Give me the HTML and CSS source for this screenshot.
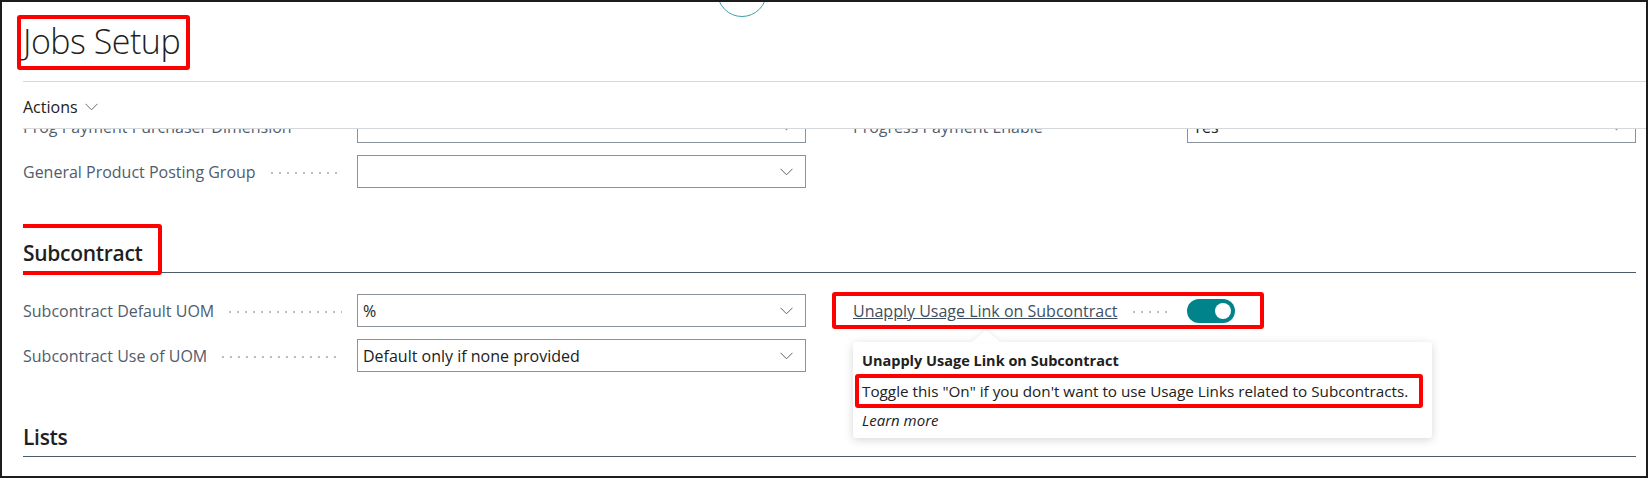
FILE: index.html
```html
<!DOCTYPE html>
<html lang="en">
<head>
  <meta charset="UTF-8" />
  <title>Jobs Setup</title>
  <link rel="stylesheet" href="styles.css">
</head>
<body>

<div class="page">
  <span class="busy-ring"></span>

  <header class="page-head">
    <div class="title-row">
      <h1 class="page-title">Jobs Setup</h1>
    </div>
    <div class="action-bar">
      <button class="actions-btn">
        Actions
        <svg width="13" height="8" viewBox="0 0 13 8"><polyline points="0.5,0.8 6.5,6.8 12.5,0.8" fill="none" stroke="#6b6b6b" stroke-width="1"/></svg>
      </button>
    </div>
  </header>

  <main class="content">
    <div class="scroll">

      <section class="group">
        <div class="fields">
          <div class="field-row">
            <label class="caption"><span>Prog Payment Purchaser Dimension</span><i class="leader"></i></label>
            <div class="select"><span></span><svg class="chev" width="13" height="8" viewBox="0 0 13 8"><polyline points="0.5,0.8 6.5,6.8 12.5,0.8"/></svg></div>
          </div>
          <div class="field-row">
            <label class="caption"><span>Progress Payment Enable</span><i class="leader"></i></label>
            <div class="select"><span>Yes</span><svg class="chev" width="13" height="8" viewBox="0 0 13 8"><polyline points="0.5,0.8 6.5,6.8 12.5,0.8"/></svg></div>
          </div>
          <div class="field-row">
            <label class="caption"><span>General Product Posting Group</span><i class="leader"></i></label>
            <div class="select"><span></span><svg class="chev" width="13" height="8" viewBox="0 0 13 8"><polyline points="0.5,0.8 6.5,6.8 12.5,0.8"/></svg></div>
          </div>
          <div class="field-row"></div>
        </div>
      </section>

      <section class="group">
        <h2 class="group-title"><span class="title-box marked">Subcontract</span></h2>
        <div class="fields">
          <div class="field-row">
            <label class="caption"><span>Subcontract Default UOM</span><i class="leader"></i></label>
            <div class="select"><span>%</span><svg class="chev" width="13" height="8" viewBox="0 0 13 8"><polyline points="0.5,0.8 6.5,6.8 12.5,0.8"/></svg></div>
          </div>
          <div class="field-row switch-row">
            <span class="mark-box"></span>
            <label class="caption"><a class="caption-link" href="#">Unapply Usage Link on Subcontract</a><i class="leader"></i></label>
            <div><span class="switch on"></span></div>

            <div class="callout">
              <div class="callout-title">Unapply Usage Link on Subcontract</div>
              <div class="callout-text">Toggle this "On" if you don't want to use Usage Links related to Subcontracts.</div>
              <div class="callout-more">Learn more</div>
            </div>
          </div>
          <div class="field-row">
            <label class="caption"><span>Subcontract Use of UOM</span><i class="leader"></i></label>
            <div class="select"><span>Default only if none provided</span><svg class="chev" width="13" height="8" viewBox="0 0 13 8"><polyline points="0.5,0.8 6.5,6.8 12.5,0.8"/></svg></div>
          </div>
          <div class="field-row"></div>
        </div>
      </section>

      <section class="group">
        <h2 class="group-title"><span class="title-box">Lists</span></h2>
      </section>

    </div>
  </main>
</div>

</body>
</html>
```

FILE: styles.css
```css
body {
  margin: 0;
  background-color: #fff;
  font-family: "Open Sans", "Noto Sans", sans-serif;
  color: #212121;
}

.page {
  position: relative;
  width: 1648px;
  height: 478px;
  box-sizing: border-box;
  border: 2px solid #1c1c1c;
  padding-left: 21px;
  overflow: hidden;
  background-color: #fff;
}

/* the little spinner peeking in at the top */
.busy-ring {
  position: absolute;
  left: 715px;
  top: -35px;
  width: 48px;
  height: 48px;
  border: 1.5px solid #3f9ea8;
  border-radius: 50%;
  background: #fff;
}

/* header */
.title-row {
  padding-top: 13px;
  padding-bottom: 11px;
  border-bottom: 1px solid #d6d9dc;
}

.page-title {
  display: inline-block;
  box-sizing: border-box;
  width: 173px;
  height: 55px;
  margin: 0 0 0 -6px;
  padding: 0 0 3px 2px;
  border: 4px solid #f00;
  border-radius: 3px;
  font-size: 34px;
  font-weight: 300;
  letter-spacing: -0.5px;
  line-height: 44px;
  color: #1f1f1f;
  white-space: nowrap;
}

.action-bar {
  height: 46px;
  display: flex;
  align-items: center;
  border-bottom: 1px solid #d6d9dc;
}

.actions-btn {
  display: flex;
  align-items: center;
  gap: 7px;
  padding: 4px 0 0 0;
  border: none;
  background: none;
  font-family: inherit;
  font-size: 16px;
  color: #212121;
}

/* body */
.content {
  overflow: hidden;
  margin-right: 10px;
  height: 347px;
}

.scroll {
  margin-top: -19px;
}

.group + .group {
  margin-top: 36px;
}

.group-title {
  margin: 0;
  border-bottom: 1px solid #4b5b6a;
  font-size: 21px;
  font-weight: 600;
  letter-spacing: -0.3px;
  color: #1f1f1f;
}

.title-box {
  display: block;
  box-sizing: border-box;
  width: 149px;
  height: 51px;
  margin: 0 0 -3px -10px;
  padding: 8px 0 0 6px;
  border: 4px solid transparent;
  line-height: 35px;
}

.title-box.marked {
  border-color: #f00;
  border-radius: 3px;
}

.group-title + .fields {
  margin-top: 21px;
}

.fields {
  display: grid;
  grid-template-columns: 1fr 1fr;
  column-gap: 47px;
  row-gap: 12px;
}

.field-row {
  position: relative;
  display: grid;
  grid-template-columns: 334px 1fr;
  align-items: center;
  height: 33px;
}

.caption {
  display: flex;
  align-items: center;
  font-size: 16px;
  color: #505c6d;
  white-space: nowrap;
}

.caption-link {
  color: #3f4f61;
  text-decoration: underline;
}

.leader {
  flex: 1;
  height: 4px;
  margin: 2px 15px 0 12px;
  background-image: radial-gradient(circle, #b9bec4 0.9px, transparent 1.3px);
  background-size: 8px 4px;
  background-repeat: repeat-x;
}

.select {
  height: 33px;
  box-sizing: border-box;
  display: flex;
  align-items: center;
  justify-content: space-between;
  padding: 0 12px 0 5px;
  border: 1px solid #8b939c;
  font-size: 16px;
  color: #212121;
}

.chev polyline {
  fill: none;
  stroke: #606060;
  stroke-width: 1;
}

.switch {
  position: relative;
  display: block;
  width: 48px;
  height: 24px;
  border-radius: 12px;
  background-color: #00838a;
}

.switch.on::after {
  content: "";
  position: absolute;
  right: 4px;
  top: 4px;
  width: 16px;
  height: 16px;
  border-radius: 50%;
  background-color: #fff;
}

.mark-box {
  position: absolute;
  left: -21px;
  top: -2px;
  width: 432px;
  height: 37px;
  box-sizing: border-box;
  border: 4px solid #f00;
  border-radius: 3px;
  pointer-events: none;
}

/* tooltip */
.callout {
  position: absolute;
  left: 0;
  top: 48px;
  z-index: 2;
  width: 579px;
  height: 96px;
  box-sizing: border-box;
  padding: 9px 9px 0 2px;
  background-color: #fff;
  border-radius: 3px;
  box-shadow: 0 2px 10px rgba(0, 0, 0, 0.16);
}

.callout::before {
  content: "";
  position: absolute;
  left: 119px;
  top: -12px;
  border-left: 14px solid transparent;
  border-right: 14px solid transparent;
  border-bottom: 12px solid #fff;
  filter: drop-shadow(0 -2px 2px rgba(0, 0, 0, 0.06));
}

.callout-title {
  margin-left: 7px;
  font-size: 14.5px;
  font-weight: 700;
  line-height: 20px;
  color: #212121;
}

.callout-text {
  margin-top: 3px;
  height: 34px;
  box-sizing: border-box;
  padding-left: 3px;
  border: 4px solid #f00;
  border-radius: 3px;
  font-size: 15.25px;
  line-height: 26px;
  color: #212121;
  white-space: nowrap;
}

.callout-more {
  margin: 2px 0 0 7px;
  font-size: 15px;
  font-style: italic;
  line-height: 20px;
  color: #212121;
}
```
